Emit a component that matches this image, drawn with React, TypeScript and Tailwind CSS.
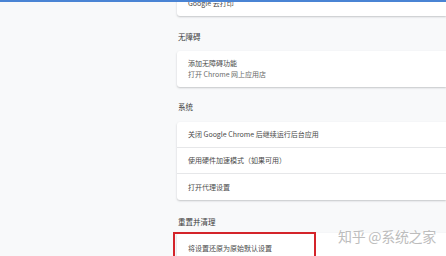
import React from "react";

const font = { fontFamily: '"Noto Sans CJK SC", "Noto Sans", sans-serif' };

function Heading({ children, className }: { children: React.ReactNode; className: string }) {
  return (
    <div className={"h-[10px] leading-[10px] text-[7.5px] text-[#3a3a3a] pl-[1px] " + className}>
      {children}
    </div>
  );
}

function Card({ children, className = "" }: { children: React.ReactNode; className?: string }) {
  return (
    <div
      className={
        "bg-white rounded-l-[3px] shadow-[0_1px_2px_rgba(60,64,67,0.28)] " + className
      }
    >
      {children}
    </div>
  );
}

function Row({ text, last }: { text: string; last?: boolean }) {
  return (
    <div
      className={
        "h-[26px] flex items-center pl-[11px] text-[7px] text-[#4a4a4a] " +
        (last ? "" : "border-b border-[#e6e7e9]")
      }
    >
      {text}
    </div>
  );
}

export default function App() {
  return (
    <div className="relative w-[446px] h-[256px] overflow-hidden bg-[#f8f9fa]" style={font}>
      {/* window top edge */}
      <div className="absolute top-0 left-0 right-0 h-[2px] bg-[#4a84d4] z-10" />

      <div className="flex">
        <div className="w-[177px] shrink-0" />
        <div className="flex-1">
          <Card className="-mt-[14px] h-[30px] bg-[#fffef6] pt-[12px] pl-[11px] text-[7px] leading-[10px] text-[#4a4a4a]">
            Google 云打印
          </Card>

          <Heading className="mt-[16px]">无障碍</Heading>
          <Card className="mt-[9px] h-[36px] pt-[7px] pl-[11px] text-[7px] leading-[11px]">
            <div className="text-[#4a4a4a]">添加无障碍功能</div>
            <div className="text-[#6a6a6a]">打开 Chrome 网上应用店</div>
          </Card>

          <Heading className="mt-[15px]">系统</Heading>
          <Card className="mt-[10px]">
            <Row text="关闭 Google Chrome 后继续运行后台应用" />
            <Row text="使用硬件加速模式（如果可用）" />
            <Row text="打开代理设置" last />
          </Card>

          <Heading className="mt-[17px]">重置并清理</Heading>
          <div className="relative mt-[6px]">
            <Card className="h-[30px] flex items-center pl-[11px] text-[7px] text-[#4a4a4a] pt-[1px]">
              将设置还原为原始默认设置
            </Card>
            <div className="absolute -left-[4px] -top-[1px] w-[143px] h-[40px] border-[2px] border-[#d4242a]" />
          </div>
        </div>
      </div>

      {/* watermark */}
      <div
        className="absolute left-[338px] top-[227px] text-[14px] leading-[18px] text-[#bdbdbd] tracking-[-0.3px]"
        style={{ textShadow: "0 0 1px #fff, 1px 1px 0 #fff" }}
      >
        知乎 @系统之家
      </div>
    </div>
  );
}
